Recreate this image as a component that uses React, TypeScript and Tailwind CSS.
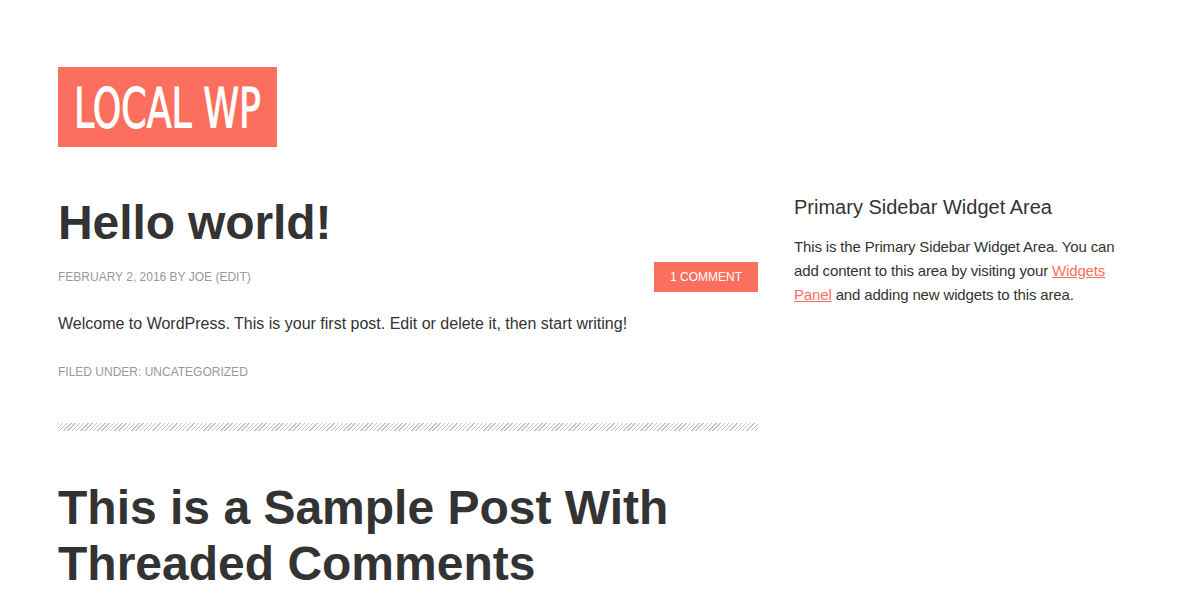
export default function App() {
  return (
    <div className="min-h-screen bg-white text-[#333]" style={{ fontFamily: '"Liberation Sans", Arial, sans-serif' }}>
      <div className="pl-[58px] pt-[67px]">
        {/* Header */}
        <div className="flex h-[80px] w-[219px] items-center justify-center bg-[#fc6f5e]">
          <svg width="189" height="56" viewBox="0 0 189 56">
            <text
              x="1"
              y="48"
              textLength="187"
              lengthAdjust="spacingAndGlyphs"
              fill="#fff"
              stroke="#fff"
              strokeWidth="1"
              fontSize="56"
              fontFamily='"Liberation Sans Narrow", "DejaVu Sans Condensed", "Liberation Sans", sans-serif'
            >
              LOCAL WP
            </text>
          </svg>
        </div>

        <div className="mt-[40px] flex">
          {/* Content */}
          <main className="w-[700px] pt-[7px]">
            <article>
              <h1 className="text-[48px] font-bold leading-[1.2] tracking-[-0.1px]">Hello world!</h1>
              <div className="mt-[10px] flex h-[30px] items-center justify-between text-[12px] uppercase text-[#999]">
                <span>February 2, 2016 by Joe (Edit)</span>
                <a className="flex h-[30px] w-[104px] items-center justify-center bg-[#fc6f5e] text-white">1 Comment</a>
              </div>
              <p className="mt-[19px] text-[16px] leading-[26px]">
                Welcome to WordPress. This is your first post. Edit or delete it, then start writing!
              </p>
              <div className="mt-[26px] text-[12px] uppercase text-[#999]">Filed Under: Uncategorized</div>
              <div className="mt-[42px] h-[8px] w-full bg-[repeating-linear-gradient(135deg,#c4c4c4_0px,#c4c4c4_1px,#fff_1px,#fff_3px)]" />
            </article>
            <article className="mt-[49px]">
              <h1 className="text-[48px] font-bold leading-[56px]">
                This is a Sample Post With Threaded Comments
              </h1>
            </article>
          </main>

          {/* Sidebar */}
          <aside className="ml-[36px] w-[346px] pt-[8px]">
            <h4 className="text-[20px] leading-[24px]">Primary Sidebar Widget Area</h4>
            <p className="mt-[16px] text-[15px] leading-[24px] tracking-[-0.15px]">
              This is the Primary Sidebar Widget Area. You can add content to this area by visiting your{" "}
              <a className="text-[#fc6f5e] underline">Widgets Panel</a> and adding new widgets to this area.
            </p>
          </aside>
        </div>
      </div>
    </div>
  );
}
